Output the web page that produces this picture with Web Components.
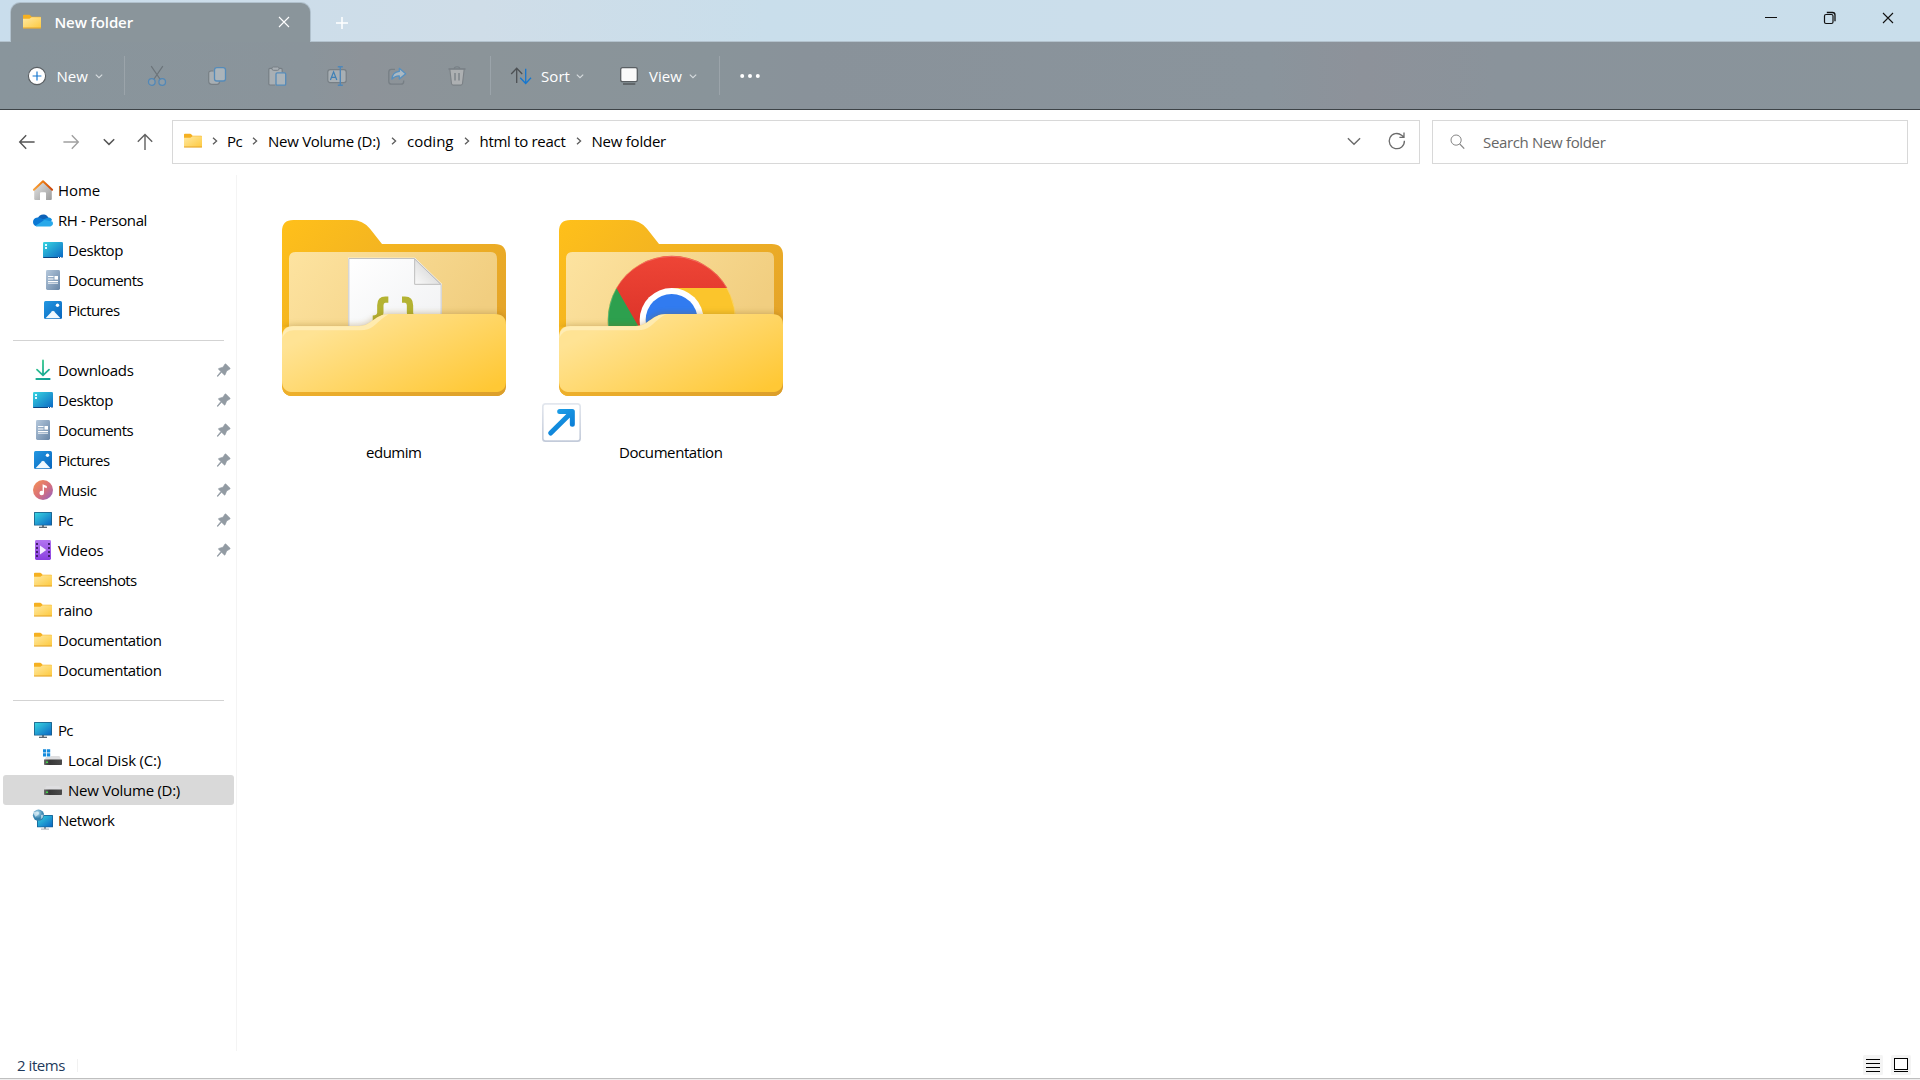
<!DOCTYPE html>
<html lang="en">
<head>
<meta charset="utf-8">
<title>New folder</title>
<style>
  html, body { margin: 0; height: 100%; overflow: hidden; }
  body { font-family: "Open Sans", "Noto Sans", sans-serif; font-size: 15px; background: #fff; color: #000; }
</style>
</head>
<body>
<explorer-window></explorer-window>
<script>
let uid = 0;
const FOLDER = id => `<defs><linearGradient id="f${id}" x1="0" y1="0" x2="1" y2="1"><stop offset="0" stop-color="#ffe9a2"/><stop offset="1" stop-color="#fdc93f"/></linearGradient></defs>
  <path d="M1 3.6Q1 2.7 1.9 2.7H7.2Q7.8 2.7 8.2 3.2L9.6 4.7H18.2Q19 4.7 19 5.6V8H1Z" fill="#f5b021"/>
  <path d="M1 6.8H7.4L9.6 5.3H19V16.2H1Z" fill="url(#f${id})"/><path d="M1 15.4H19V15.9Q19 16.6 18.2 16.6H1.8Q1 16.6 1 15.9Z" fill="#e4a32c"/>`;
const BLUE = id => `<linearGradient id="b${id}" x1="0" y1="0" x2="1" y2="1"><stop offset="0" stop-color="#38d5e0"/><stop offset="1" stop-color="#0b67c4"/></linearGradient>`;
const ICONS = {
  folder: FOLDER,
  home: id => `<defs><linearGradient id="h${id}" x1="0" y1="0" x2="1" y2="1"><stop offset="0" stop-color="#e6e6e6"/><stop offset="1" stop-color="#9b9b9b"/></linearGradient><linearGradient id="r${id}" x1="0" x2="1"><stop offset="0" stop-color="#f8a13c"/><stop offset=".5" stop-color="#ec7a12"/><stop offset="1" stop-color="#c9440b"/></linearGradient></defs>
    <path d="M1.2 10 10 1.6 18.8 10V19Q18.8 20 17.8 20H13V13.2Q13 12.2 12 12.2H8Q7 12.2 7 13.2V20H2.2Q1.2 20 1.2 19Z" fill="url(#h${id})"/>
    <path d="M.9 9.8 10 1.3 19.1 9.8" fill="none" stroke="url(#r${id})" stroke-width="2" stroke-linecap="round" stroke-linejoin="round"/>`,
  cloud: () => `<path d="M4.8 8.3C6 4.6 10.8 3.2 14.2 6L16 8.6 9 12Z" fill="#0d62b8"/><path d="M4.4 7.5C1.5 7.7 0 9.8 0 12c0 2.4 1.7 4.2 4 4.2L12 10.5 7.8 8Q6 7.3 4.4 7.5Z" fill="#0b78d4"/><path d="M9.5 9.7 14 8Q17 6.6 19 9.4L17.4 13 12 12.6Z" fill="#1490df"/><path d="M2.4 15.7 11.5 9.9 19.4 11.4C21 14 19 16.4 16.5 16.4H4Q3 16.3 2.4 15.7Z" fill="#29a9ea"/>`,
  desktop: id => `<defs>${BLUE(id)}</defs><rect x="0" y="2" width="20" height="16" rx="1.3" fill="url(#b${id})"/><path d="M0 17H20V17.2Q19.8 18 19 18H1Q.2 18 0 17.2Z" fill="#0b4381"/><path d="M2 4h2v2H2zM2 7h2v2H2z" fill="#e5fbff"/><path d="M15 17h1v1h-1zM17 17h1v1h-1zM18.5 17h1v1h-1z" fill="#fff"/>`,
  document: id => `<defs><linearGradient id="d${id}" x1="0" y1="0" x2="1" y2="1"><stop offset="0" stop-color="#b5c8dc"/><stop offset="1" stop-color="#6684a5"/></linearGradient></defs><rect x="3" y="0" width="14" height="20" rx="1.4" fill="url(#d${id})"/><path d="M5 6.5h5.500M5 9h5.500M5 11.5h10" stroke="#fff" stroke-width="1.2"/><path d="M11.5 6h3.5v3.600h-3.5z" fill="#fff"/><path d="M5 13.2h10" stroke="#fff" stroke-width=".9"/>`,
  picture: id => `<defs><linearGradient id="p${id}" x1="0" y1="0" x2="1" y2="1"><stop offset="0" stop-color="#2398e2"/><stop offset="1" stop-color="#0864bc"/></linearGradient></defs><rect x="1" y="1" width="18" height="18" rx="1.5" fill="url(#p${id})"/><path d="M2.5 18.3 9.1 11.2Q10 10.3 10.9 11.2L17.5 18.3Z" fill="#f0f9ff"/><circle cx="14.5" cy="5.3" r="1.7" fill="#fff"/>`,
  download: id => `<defs><linearGradient id="g${id}" gradientUnits="userSpaceOnUse" x1="3" y1="0" x2="17" y2="20"><stop offset="0" stop-color="#3ccf8b"/><stop offset="1" stop-color="#0c9b97"/></linearGradient></defs><path d="M10 .5V15M4 9.6 10 15.3 16 9.6M3.3 19H16.7" fill="none" stroke="url(#g${id})" stroke-width="1.8" stroke-linecap="round"/>`,
  music: id => `<defs><linearGradient id="m${id}" x1="0.1" y1="0.1" x2=".9" y2=".9"><stop offset="0" stop-color="#f18c5a"/><stop offset=".55" stop-color="#d8707a"/><stop offset="1" stop-color="#9c63b8"/></linearGradient></defs><circle cx="10" cy="10" r="10" fill="url(#m${id})"/><circle cx="8.7" cy="13" r="2.3" fill="#fff"/><path d="M9.6 13V4.2L13.8 5.9V8.3L11 7.2V13Z" fill="#fff"/>`,
  pc: id => `<defs>${BLUE(id)}</defs><path d="M9 15h2v2H9z" fill="#777f88"/><path d="M6 16.7h8v1.2H6z" fill="#4f5964"/><rect x="1" y="2" width="18" height="13.6" rx=".5" fill="#195c86"/><rect x="1.8" y="2.8" width="16.4" height="12" fill="url(#b${id})"/>`,
  video: id => `<defs><linearGradient id="v${id}" x1="0" y1="0" x2="0" y2="1"><stop offset="0" stop-color="#b275f0"/><stop offset="1" stop-color="#8a3fdf"/></linearGradient></defs><rect x="2" y="0" width="16" height="20" rx="1.4" fill="url(#v${id})"/><path d="M3 3h2v2H3zM3 7h2v2H3zM3 11h2v2H3zM3 15h2v2H3zM15 3h2v2h-2zM15 7h2v2h-2zM15 11h2v2h-2zM15 15h2v2h-2z" fill="#44206f"/><path d="M7 5.6V14.4L13.3 10Z" fill="#f4ecff"/>`,
  disk: id => `<defs><linearGradient id="k${id}" x1="0" x2="1"><stop offset="0" stop-color="#6b6b6b"/><stop offset=".3" stop-color="#383838"/><stop offset="1" stop-color="#4b4b4b"/></linearGradient></defs><path d="M4 6H16Q16.5 6 16.8 6.5L19 11H1L3.2 6.5Q3.5 6 4 6Z" fill="#dedee0"/><path d="M1 9.6H19V14.2Q19 15 18.2 15H1.8Q1 15 1 14.2Z" fill="url(#k${id})"/><path d="M3 11.5h2v1.5H3z" fill="#43d64a"/>`,
  cdisk: id => ICONS.disk(id) + `<path d="M-.3 -1H7.5V7H-.3Z" fill="#fff"/><path d="M0-.7h3.2v3.200H0zM4-.7h3.200v3.200H4zM0 3.2h3.200v3.200H0zM4 3.2h3.200v3.200H4z" fill="#168bdc"/>`,
  network: id => `<defs>${BLUE(id)}<radialGradient id="n${id}" cx=".4" cy=".3"><stop offset="0" stop-color="#b8dff1"/><stop offset="1" stop-color="#3380ac"/></radialGradient></defs><path d="M11 17h2v2h-2z" fill="#8b949e"/><path d="M8 18.6h8v1H8z" fill="#a6adb4"/><rect x="4" y="5" width="16" height="12.3" rx=".6" fill="#155f94"/><rect x="4.8" y="5.8" width="14.4" height="10.8" fill="url(#b${id})"/><circle cx="5.5" cy="5.2" r="5.6" fill="url(#n${id})"/><path d="M2 2Q5 1 6 2.6T4.4 5.6 2.8 7.8 1 4.4 2 2M8 5l2.6-.6-.8 3-2 1.8Z" fill="#e3f3f9" opacity=".65"/>`,
  pin: () => `<path d="M12.8 4.1 17 8.2Q17.3 8.7 16.8 9.1L13.6 10.9 12.1 14.8Q11.8 15.4 11.3 14.9L8.6 12.2 4.7 16.500 4.2 16 7.9 11.500 5.6 9.3Q5.2 8.8 5.8 8.5L10 7.2 12 4.1Q12.4 3.7 12.8 4.1Z" fill="#929ba3" stroke="#929ba3" stroke-width=".7"/>`,
  close: () => `<path d="M5 5 15 15M15 5 5 15" stroke="currentColor" stroke-width="1.1"/>`,
  plus: () => `<path d="M10 4V16M4 10H16" stroke="#fff" stroke-width="1.5"/>`,
  min: () => `<path d="M4 9.5H16" stroke="#111" stroke-width="1"/>`,
  restore: () => `<rect x="4.5" y="6.5" width="8.500" height="9" rx="1.5" fill="none" stroke="#111" stroke-width="1.2"/><path d="M6.8 4.5H12.500Q15 4.5 15 7V13.2" fill="none" stroke="#111" stroke-width="1.3"/>`,
  add: () => `<circle cx="10" cy="10" r="8.6" fill="#fff" stroke="#5a5f63" stroke-width="1.1"/><path d="M10 5.6V14.4M5.6 10H14.4" stroke="#1878d0" stroke-width="1.2"/>`,
  down: () => `<path d="M6.8 8.6 10 11.7 13.2 8.6" fill="none" stroke="currentColor" stroke-width="1.1"/>`,
  cut: () => `<path d="M4.2 .2 13.3 13.5M15.8 .2 6.7 13.5" stroke="#6c747a" stroke-width="1.2" fill="none"/><circle cx="4.8" cy="16" r="3.3" fill="#8f9da7" stroke="#5288b7" stroke-width="1.3"/><circle cx="15.2" cy="16" r="3.3" fill="#8f9da7" stroke="#5288b7" stroke-width="1.3"/>`,
  copy: () => `<path d="M6 5H4Q1.7 5 1.7 7.3V15Q1.7 18.3 5 18.3H10Q12.5 18.3 12.5 15.5" fill="#a8afb4" stroke="#777f85" stroke-width="1.2"/><rect x="7.5" y="1.6" width="11" height="13.4" rx="2.3" fill="#abb4ba" stroke="#558bb9" stroke-width="1.3"/>`,
  paste: () => `<path d="M8 19H3Q1.8 19 1.8 17.8V3.5Q1.8 2.3 3 2.3H14Q15.2 2.3 15.2 3.5V6" fill="#a8afb4" stroke="#777f85" stroke-width="1.2"/><rect x="5" y="1" width="7" height="3.3" rx="1.4" fill="#a8afb4" stroke="#777f85"/><rect x="9" y="6.8" width="9.7" height="12.4" rx="1.3" fill="#abb4ba" stroke="#558bb9" stroke-width="1.3"/>`,
  rename: () => `<rect x=".8" y="3.6" width="18.4" height="13" rx="2.3" fill="#a8afb4" stroke="#777f85" stroke-width="1.2"/><path d="M13.3 1V19M10.8 .8H15.8M10.8 19.2H15.8" stroke="#4f87b8" stroke-width="1.4"/><path d="M3.4 14 6.6 5.8 9.8 14M4.5 11.3H8.7" fill="none" stroke="#3f80b6" stroke-width="1.2"/>`,
  share: () => `<path d="M8 3.3H4.5Q1.8 3.3 1.8 6V15.5Q1.8 18.2 4.5 18.2H14Q16.7 18.2 16.7 15.5V14.5" fill="none" stroke="#777f85" stroke-width="1.3"/><path d="M12.3 2.3 18.7 7.7 12.3 13V9.9Q8 9.7 4.9 13.2 5.4 6 12.3 5.4Z" fill="#abb9c3" stroke="#5690c0" stroke-width="1.2" stroke-linejoin="round"/>`,
  trash: () => `<path d="M7.2 3Q7.2 .8 10 .8T12.8 3" fill="none" stroke="#777f85" stroke-width="1.1"/><path d="M2.8 3H17.2L15.5 17.5Q15.3 19.1 13.8 19.1H6.2Q4.7 19.1 4.5 17.5Z" fill="#adb0b2" stroke="#7b8186" stroke-width="1.1"/><path d="M1.3 3H18.7" stroke="#777f85" stroke-width="1.2"/><path d="M8 7V14.5M12 7V14.5" stroke="#777f85" stroke-width="1.3"/>`,
  sort: () => `<path d="M5.7 17V2.5M.2 8 5.7 2.3 11.2 8" fill="none" stroke="#4d5154" stroke-width="1.3"/><path d="M14.7 2.7V17.3M9.2 11.8 14.7 17.5 20 11.8" fill="none" stroke="#1577cf" stroke-width="1.3"/>`,
  view: () => `<rect x="1.7" y="1.7" width="16.6" height="14" rx="1.8" fill="#fafafa" stroke="#5a5f63" stroke-width="1.3"/><path d="M4 18H16.3" stroke="#5a5f63" stroke-width="1.7"/>`,
  more: () => `<circle cx="2.2" cy="10" r="2" fill="#fff"/><circle cx="10" cy="10" r="2" fill="#fff"/><circle cx="17.8" cy="10" r="2" fill="#fff"/>`,
  back: () => `<path d="M2.8 10H17.6M9.2 3.2 2.7 10 9.2 16.8" fill="none" stroke="#555" stroke-width="1.4"/>`,
  fwd: () => `<path d="M2.4 10H17.2M10.8 3.2 17.3 10 10.8 16.8" fill="none" stroke="#a0a0a0" stroke-width="1.4"/>`,
  up: () => `<path d="M10 18V2.8M2.8 9.8 10 2.6 17.2 9.8" fill="none" stroke="#606060" stroke-width="1.4"/>`,
  chev: () => `<path d="M4.8 7.2 10 12.4 15.2 7.2" fill="none" stroke="#555" stroke-width="1.5"/>`,
  chevw: () => `<path d="M3.9 7.2 10 13.3 16.1 7.2" fill="none" stroke="#6b6b6b" stroke-width="1.4"/>`,
  right: () => `<path d="M8 6.7 11.6 10 8 13.3" fill="none" stroke="#5c5c5c" stroke-width="1.3"/>`,
  refresh: () => `<path d="M17.4 9.8A7.6 7.6 0 1 1 14.6 4.2L16.6 5.8M17 1.6V6.3H12.4" fill="none" stroke="#6b6b6b" stroke-width="1.3"/>`,
  search: () => `<circle cx="9.1" cy="8.1" r="5.1" fill="none" stroke="#858585" stroke-width="1"/><path d="M12.700 11.9 17.200 16.6" stroke="#858585" stroke-width="1.3"/>`,
  list: () => `<rect width="20" height="20" rx="1.5" fill="#f4f4f4"/><path d="M3 4.5H17M3 8.5H17M3 12.5H17M3 16.5H17" stroke="#000"/>`,
  large: () => `<rect width="20" height="20" rx="1.5" fill="#f4f4f4"/><rect x="3.5" y="3.5" width="13" height="11" fill="#fff" stroke="#000"/><path d="M3 16.5H17" stroke="#000"/>`
};

class UiIcon extends HTMLElement {
  connectedCallback() {
    const s = this.getAttribute('size') || 20;
    this.attachShadow({mode: 'open'}).innerHTML = `<style>:host{display:block;flex:none;width:${s}px;height:${s}px}svg{display:block;overflow:visible}</style>
      <svg width="${s}" height="${s}" viewBox="0 0 20 20">${ICONS[this.getAttribute('name')](uid++)}</svg>`;
  }
}
customElements.define('ui-icon', UiIcon);

/* A one-line label whose tracking is adjusted so that it is w pixels wide. */
class UiText extends HTMLElement {
  connectedCallback() {
    const t = this.getAttribute('text'), w = +this.getAttribute('w');
    this.attachShadow({mode: 'open'}).innerHTML = `<style>:host{display:block;flex:none;width:${w}px;white-space:pre;line-height:20px}</style><span>${t}</span>`;
    const s = this.shadowRoot.querySelector('span');
    s.style.letterSpacing = (w - s.getBoundingClientRect().width) / t.length + 'px';
  }
}
customElements.define('ui-text', UiText);

class TitleBar extends HTMLElement {
  connectedCallback() {
    this.attachShadow({mode: 'open'}).innerHTML = `<style>
      :host{display:flex;height:41px;box-sizing:content-box;border-bottom:1px solid #b3c2cd;background:linear-gradient(90deg,#c9ddec,#cfdde8 25%,#c9deeb 40%,#ccdeeb 65%,#c9deeb);padding-left:11px}
      .tab{position:relative;display:flex;align-items:center;box-sizing:border-box;width:299px;height:39px;margin-top:3px;padding:0 16px 2px 11px;border-radius:9px 9px 0 0;background:#8a959b;box-shadow:0 0 0 1px #b1c1cd;clip-path:inset(-2px -2px 0 -2px);color:#fff;font-weight:600}
      .tab ui-text{margin:0 auto 0 12.5px}
      .plus{margin:13px auto 0 22px}
      .wc{display:flex;gap:38.5px;padding:8px 22px 0 0;color:#111}
    </style>
    <div class="tab"><ui-icon name="folder"></ui-icon><ui-text text="New folder" w="78.5"></ui-text><ui-icon name="close"></ui-icon></div>
    <ui-icon class="plus" name="plus"></ui-icon>
    <div class="wc"><ui-icon name="min"></ui-icon><ui-icon name="restore"></ui-icon><ui-icon name="close"></ui-icon></div>`;
  }
}
customElements.define('title-bar', TitleBar);

class CommandBar extends HTMLElement {
  connectedCallback() {
    this.attachShadow({mode: 'open'}).innerHTML = `<style>
      :host{display:flex;align-items:center;height:67px;border-bottom:1px solid #3d4347;background:linear-gradient(90deg,#89959c,#8a949b 16%,#8d9399 19%,#8b9499 25%,#89949a 37%,#89929a 42%,#8a949c 66%,#8d929a 71%,#8a939b 78%,#89949b);color:#fff;padding-left:26.5px}
      .b{display:flex;align-items:center}
      .b>ui-icon:last-child{color:#d7dcdf}
      i{flex:none;width:1px;height:39px;background:#9ba4aa}
      .set{display:flex;gap:40px;margin:0 23px 0 22px}
    </style>
    <div class="b"><ui-icon name="add"></ui-icon><ui-text text="New" w="31.5" style="margin:0 .5px 0 10px"></ui-text><ui-icon name="down"></ui-icon></div>
    <i style="margin-left:15.5px"></i>
    <div class="set">${['cut','copy','paste','rename','share','trash'].map(n => `<ui-icon name="${n}"></ui-icon>`).join('')}</div>
    <i></i>
    <div class="b" style="margin-left:20px"><ui-icon name="sort"></ui-icon><ui-text text="Sort" w="29" style="margin:0 -.5px 0 10px"></ui-text><ui-icon name="down"></ui-icon></div>
    <div class="b" style="margin-left:29px"><ui-icon name="view"></ui-icon><ui-text text="View" w="33" style="margin:0 .5px 0 10.5px"></ui-text><ui-icon name="down"></ui-icon></div>
    <i style="margin:0 20.5px 0 16px"></i><ui-icon name="more"></ui-icon>`;
  }
}
customElements.define('command-bar', CommandBar);

class AddressBar extends HTMLElement {
  connectedCallback() {
    const crumbs = [['Pc', 15, 1.5, 2.5], ['New Volume (D:)', 112, 2.5, 3.5], ['coding', 46.5, 3.5, 3.5], ['html to react', 86, 3, 3], ['New folder', 74.500, 3, 3]];
    this.attachShadow({mode: 'open'}).innerHTML = `<style>
      :host{display:flex;align-items:center;height:65px;padding:0 12px 0 17px}
      .nav{display:flex;width:155px;flex:none;margin-bottom:2px}
      .box{display:flex;align-items:center;height:44px;box-sizing:border-box;border:1px solid #d8d8d8;background:#fff;margin-bottom:1px}
      .path{flex:1;padding:0 12px 2px 10px}
      .search{width:476px;margin-left:12px;padding-left:14px;color:#666}
    </style>
    <div class="nav"><ui-icon name="back"></ui-icon><ui-icon name="fwd" style="margin-left:24px"></ui-icon><ui-icon name="chev" style="margin-left:18px"></ui-icon><ui-icon name="up" style="margin-left:16px"></ui-icon></div>
    <div class="box path"><ui-icon name="folder"></ui-icon>
      ${crumbs.map(([t, w, a, b]) => `<ui-icon name="right" style="margin-left:${a}px"></ui-icon><ui-text text="${t}" w="${w}" style="margin-left:${b}px"></ui-text>`).join('')}
      <ui-icon name="chevw" style="margin:0 0 0 auto"></ui-icon><ui-icon name="refresh" style="margin:0 0 0 23px"></ui-icon></div>
    <div class="box search"><ui-icon name="search"></ui-icon><ui-text text="Search New folder" w="122.5" style="margin:-1px 0 0 16px"></ui-text></div>`;
  }
}
customElements.define('address-bar', AddressBar);

class NavItem extends HTMLElement {
  connectedCallback() {
    const a = n => this.getAttribute(n);
    this.attachShadow({mode: 'open'}).innerHTML = `<style>
      :host{display:flex;align-items:center;box-sizing:border-box;height:30px;margin-left:3px;width:231px;padding:0 1px 0 ${this.hasAttribute('nested') ? 40 : 30}px;border-radius:3px}
      :host([selected]){background:#d9d9d9}
      ui-text{margin:0 auto 0 5px}
    </style><ui-icon name="${a('icon')}"></ui-icon><ui-text text="${a('label')}" w="${a('w')}"></ui-text>${this.hasAttribute('pinned') ? '<ui-icon name="pin"></ui-icon>' : ''}`;
  }
}
customElements.define('nav-item', NavItem);

class NavPane extends HTMLElement {
  connectedCallback() {
    const it = ([icon, label, w, f = '']) => icon ? `<nav-item icon="${icon}" label="${label}" w="${w}" ${f}></nav-item>` : '<hr>';
    this.attachShadow({mode: 'open'}).innerHTML = `<style>
      :host{display:block;width:236px;flex:none;border-right:1px solid #f4f4f4;margin-bottom:0}
      hr{border:0;height:1px;margin:15px 12px 14px 13px;background:#d3d3d3}
    </style>` + [
      ['home','Home',42],['cloud','RH - Personal',89],['desktop','Desktop',55,'nested'],['document','Documents',75,'nested'],['picture','Pictures',51.5,'nested'],[],
      ['download','Downloads',75.5,'pinned'],['desktop','Desktop',55,'pinned'],['document','Documents',75,'pinned'],['picture','Pictures',51.5,'pinned'],['music','Music',38.5,'pinned'],['pc','Pc',14.5,'pinned'],['video','Videos',45.5,'pinned'],
      ['folder','Screenshots',78.5],['folder','raino',34.5],['folder','Documentation',103.5],['folder','Documentation',103.5],[],
      ['pc','Pc',14.5],['cdisk','Local Disk (C:)',93,'nested'],['disk','New Volume (D:)',112,'nested selected'],['network','Network',56.5]].map(it).join('');
  }
}
customElements.define('nav-pane', NavPane);

const CONTENT = {
  json: `<path d="M266 175H464L544 253V400H266Z" fill="url(#paper)" stroke="#fff" stroke-width="4"/><path d="M266.500 400V175.500H464L543.500 253V400" fill="none" stroke="#b6b6b6" stroke-width="2.5"/><path d="M464 177V253H542Z" fill="url(#fold)" stroke="#bdbdbd" stroke-width="3"/>
    <path d="M385 299H376Q361 299 361 316V338Q361 354 339 356Q361 358 361 376V392" fill="none" stroke="#b4b333" stroke-width="19"/><path d="M426 299H435Q450 299 450 316V338Q450 354 472 356" fill="none" stroke="#b4b333" stroke-width="19"/>`,
  chrome: `<g><circle cx="404" cy="360" r="192" fill="#fbc52c"/><path d="M404 360 238 264A192 192 0 0 0 404 552Z" fill="#2da04e"/><path d="M238 264A192 192 0 0 1 571 264H404L321 408Z" fill="url(#red)"/><circle cx="404" cy="360" r="96" fill="#fff"/><circle cx="404" cy="360" r="78" fill="#317bf0"/><circle cx="404" cy="360" r="191" fill="none" stroke="#fff" stroke-width="1.5" opacity=".45"/></g>`
};
class FolderTile extends HTMLElement {
  connectedCallback() {
    const front = 'M66 412Q66 378 100 378H296C334 378 345 342 386 342H704Q738 342 738 374V542Q738 576 704 576H100Q66 576 66 542Z';
    this.attachShadow({mode: 'open'}).innerHTML = `<style>:host{display:flex;flex-direction:column;align-items:center;width:277px}svg{display:block;width:277px;height:242px;overflow:visible}ui-text{margin-right:9.5px}</style>
    <svg viewBox="0 0 831 726"><defs>
      <linearGradient id="back" x1="0" y1="0" x2="1" y2=".8"><stop offset="0" stop-color="#ffc01a"/><stop offset="1" stop-color="#e0a02c"/></linearGradient>
      <linearGradient id="inner" x1="0" y1="0" x2="1" y2=".35"><stop offset="0" stop-color="#fde3a0"/><stop offset="1" stop-color="#f1ce80"/></linearGradient>
      <linearGradient id="front" gradientUnits="userSpaceOnUse" x1="330" y1="320" x2="490" y2="660"><stop offset="0" stop-color="#ffe394"/><stop offset="1" stop-color="#ffc835"/></linearGradient>
      <linearGradient id="paper" x1="0" y1="0" x2="1" y2="1"><stop offset="0" stop-color="#fff"/><stop offset="1" stop-color="#f0f1f3"/></linearGradient>
      <linearGradient id="fold" x1="0" y1="1" x2="1" y2="0"><stop offset="0" stop-color="#fafafa"/><stop offset="1" stop-color="#c9c9c9"/></linearGradient>
      <linearGradient id="red" x1="0" y1="0" x2="0" y2="1"><stop offset="0" stop-color="#ee4536"/><stop offset="1" stop-color="#da3127"/></linearGradient>
      <linearGradient id="edge" x1="0" x2="1"><stop offset="0" stop-color="#eeb02b"/><stop offset="1" stop-color="#dc9f2b"/></linearGradient>
      <linearGradient id="arrow" gradientUnits="userSpaceOnUse" x1="50" y1="630" x2="100" y2="700"><stop offset="0" stop-color="#1da0e8"/><stop offset="1" stop-color="#0878d3"/></linearGradient>
      <linearGradient id="badge" x1="0" y1="0" x2="0" y2="1"><stop offset="0" stop-color="#e3e7ee"/><stop offset="1" stop-color="#c3cbda"/></linearGradient>
      <filter id="soft" x="-10%" y="-20%" width="120%" height="140%"><feGaussianBlur stdDeviation="11"/></filter>
      <clipPath id="c"><path d="M66 100H738V380H66Z"/></clipPath>
    </defs>
    <path d="M66 94Q66 60 100 60H276Q308 60 330 86L366 132H704Q738 132 738 166V554Q738 588 704 588H100Q66 588 66 554Z" fill="url(#back)"/>
    <path d="M87 176Q87 156 107 156H691Q711 156 711 176V440H87Z" fill="url(#inner)"/>
    <g clip-path="url(#c)">${CONTENT[this.getAttribute('content')]}<path d="${front}" fill="#8a6414" opacity=".42" filter="url(#soft)"/></g>
    <path d="M66 500H738V554Q738 588 704 588H100Q66 588 66 554Z" fill="url(#edge)"/>
    <path d="${front}" fill="url(#front)"/>
    <path d="M67 415Q67 379 101 379H296C334 379 345 343 386 343L372 352C345 372 338 391 300 391H100Q76 391 67 415Z" fill="#fff1c4" opacity=".65"/>
    ${this.hasAttribute('shortcut') ? `<rect x="17.500" y="611.500" width="112" height="112" rx="8" fill="#fff" stroke="url(#badge)" stroke-width="5"/><path d="M41 699 104 637M68 634.500H106V673" fill="none" stroke="url(#arrow)" stroke-width="15" stroke-linecap="round" stroke-linejoin="round"/>` : ''}
    </svg><ui-text text="${this.getAttribute('label')}" w="${this.getAttribute('w')}"></ui-text>`;
  }
}
customElements.define('folder-tile', FolderTile);

class StatusBar extends HTMLElement {
  connectedCallback() {
    this.attachShadow({mode: 'open'}).innerHTML = `<style>:host{display:flex;align-items:center;box-sizing:border-box;height:29px;padding:0 9px 0 17px;border-bottom:1px solid #eee;box-shadow:inset 0 -1px #bfbfbf;color:#1e395b}i{width:1px;height:13px;background:#f1f1f1;margin:0 auto 0 12px}ui-icon{margin:0 0 0 8px}</style>
    <ui-text text="2 items" w="48"></ui-text><i></i><ui-icon name="list"></ui-icon><ui-icon name="large"></ui-icon>`;
  }
}
customElements.define('status-bar', StatusBar);

class ExplorerWindow extends HTMLElement {
  connectedCallback() {
    this.attachShadow({mode: 'open'}).innerHTML = `<style>
      :host{display:flex;flex-direction:column;height:1080px;width:1920px;overflow:hidden;background:#fff}
      title-bar,command-bar,address-bar,status-bar{flex:none}
      main{flex:1;display:flex;min-height:0}
      .files{display:flex;padding:25px 0 0 23px}
    </style>
    <title-bar></title-bar><command-bar></command-bar><address-bar></address-bar>
    <main><nav-pane></nav-pane><div class="files"><folder-tile content="json" label="edumim" w="55.5"></folder-tile><folder-tile content="chrome" label="Documentation" w="103.5" shortcut></folder-tile></div></main>
    <status-bar></status-bar>`;
  }
}
customElements.define('explorer-window', ExplorerWindow);
</script>
</body>
</html>
